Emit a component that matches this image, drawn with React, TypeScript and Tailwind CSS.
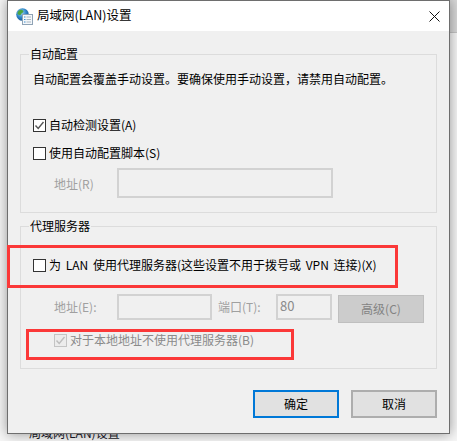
const FONT = '"Noto Sans CJK SC", "Noto Sans", sans-serif';

function CheckBox({ checked, disabled }: { checked?: boolean; disabled?: boolean }) {
  return (
    <span className={`flex h-[13px] w-[13px] shrink-0 items-center justify-center border ${disabled ? 'border-[#c4c4c4] bg-[#ececec]' : 'border-[#333333] bg-white'}`}>
      {checked && (
        <svg width="11" height="11" viewBox="0 0 11 11" fill="none">
          <path d="M1.5 5.5 L4.2 8.5 L9.5 2" stroke={disabled ? '#bdbdbd' : '#555555'} strokeWidth="1.4" />
        </svg>
      )}
    </span>
  );
}

function TextBox({ className, children }: { className: string; children?: React.ReactNode }) {
  return <div className={`border-2 border-[#d2d2d2] bg-[#f0f0f0] ${className}`}>{children}</div>;
}

function WinIcon() {
  return (
    <svg width="17" height="17" viewBox="0 0 17 17" className="shrink-0">
      <defs>
        <radialGradient id="globe" cx="40%" cy="35%" r="70%">
          <stop offset="0%" stopColor="#9fd8f5" />
          <stop offset="55%" stopColor="#2f86c9" />
          <stop offset="100%" stopColor="#14508f" />
        </radialGradient>
      </defs>
      <circle cx="6.5" cy="6.5" r="6.3" fill="url(#globe)" />
      <path d="M3 2.5 C5 1.2 7 2 7.5 3.5 C7 5 5.5 4.8 5 6.2 C4.6 7.5 3 7.2 1.5 6 C1.5 4.5 2 3.4 3 2.5 Z" fill="#4ea63f" />
      <path d="M8 8 C9.5 7.5 10.5 8.5 10 10 C9 11 8 11 7.5 10 Z" fill="#4ea63f" />
      <rect x="6.5" y="6.5" width="10" height="10" fill="#f4f7fa" stroke="#8fa3b5" />
      <path d="M8 9 H9.5 M8 11.5 H9.5 M8 14 H9.5" stroke="#3d8fd0" strokeWidth="1.2" />
      <path d="M10.5 9 H15 M10.5 11.5 H15 M10.5 14 H15" stroke="#a9b6c2" />
    </svg>
  );
}

export default function App() {
  return (
    <div className="relative h-[441px] w-[457px] overflow-hidden bg-[#f6f6f6] text-[12px] leading-[16px] text-black" style={{ fontFamily: FONT }}>
      <div className="flex h-full">
        <div className="w-[7px] shrink-0" />
        <div className="flex w-[443px] shrink-0 flex-col">
          <div className="relative z-10 flex h-[434px] shrink-0 flex-col border border-[#6e6e6e] bg-[#f0f0f0] shadow-[0_0_12px_rgba(0,0,0,0.4)]">
            <div className="flex h-[30px] shrink-0 items-center bg-white pl-[8px] pr-[9px]">
              <WinIcon />
              <span className="ml-[4px] -translate-y-px text-[12.5px]">局域网(LAN)设置</span>
              <svg width="11" height="11" viewBox="0 0 11 11" className="ml-auto" fill="none">
                <path d="M0.5 0.5 L10.5 10.5 M10.5 0.5 L0.5 10.5" stroke="#111111" strokeWidth="1" />
              </svg>
            </div>
            <div className="flex flex-1 flex-col px-[12px] pt-[15px]">
              <fieldset className="h-[167px] border border-[#dcdcdc] pl-[12px]">
                <legend className="-ml-[4px] px-[1px]">自动配置</legend>
                <p className="mt-[9px] whitespace-nowrap">自动配置会覆盖手动设置。要确保使用手动设置，请禁用自动配置。</p>
                <label className="mt-[30px] flex items-center gap-[3px]">
                  <CheckBox checked />
                  自动检测设置(A)
                </label>
                <label className="mt-[12px] flex items-center gap-[3px]">
                  <CheckBox />
                  使用自动配置脚本(S)
                </label>
                <div className="mt-[7px] flex items-center">
                  <span className="w-[84px] translate-y-[1px] pl-[21px] text-[#a0a0a0]">地址(R)</span>
                  <TextBox className="h-[30px] w-[216px]" />
                </div>
              </fieldset>
              <fieldset className="mt-[5px] h-[151px] border border-[#dcdcdc] pl-[12px]">
                <legend className="-ml-[4px] px-[1px]">代理服务器</legend>
                <label className="mt-[23px] flex items-center gap-[3px] whitespace-nowrap [word-spacing:2px]">
                  <CheckBox />
                  为 LAN 使用代理服务器(这些设置不用于拨号或 VPN 连接)(X)
                </label>
                <div className="mt-[21px] flex items-start">
                  <span className="w-[84px] pl-[21px] pt-[5px] text-[#a0a0a0]">地址(E):</span>
                  <TextBox className="h-[26px] w-[95px]" />
                  <span className="ml-[6px] w-[58px] pt-[5px] text-[#a0a0a0]">端口(T):</span>
                  <TextBox className="h-[26px] w-[56px] pl-[2px] text-[13px] leading-[20px] text-[#8a8a8a]">80</TextBox>
                  <button type="button" className="ml-[6px] mt-[1px] h-[28px] w-[86px] border border-[#bfbfbf] bg-[#cccccc] text-[#838383]">高级(C)</button>
                </div>
                <label className="ml-[21px] mt-[9px] flex items-center gap-[3px] text-[#8a8a8a]">
                  <CheckBox checked disabled />
                  对于本地地址不使用代理服务器(B)
                </label>
              </fieldset>
              <div className="mt-[21px] flex justify-end gap-[12px]">
                <button type="button" className="h-[28px] w-[86px] border-2 border-[#0078d7] bg-[#e1e1e1]">确定</button>
                <button type="button" className="h-[28px] w-[86px] border-2 border-[#adadad] bg-[#e1e1e1]">取消</button>
              </div>
            </div>
          </div>
          <div className="-mt-[9px] pl-[22px] text-[#1a1a2a]">局域网(LAN)设置</div>
        </div>
        <div className="flex h-full flex-1 flex-col">
          <div className="h-[33px] border-b border-[#c4c4c4] bg-[#d8d8d8]" />
        </div>
      </div>
      <div className="absolute left-[7px] top-[245px] z-20 h-[43px] w-[391px] border-[3px] border-[#fb3838]" />
      <div className="absolute left-[26px] top-[329px] z-20 h-[31px] w-[268px] border-[3px] border-[#fb3838]" />
    </div>
  );
}
